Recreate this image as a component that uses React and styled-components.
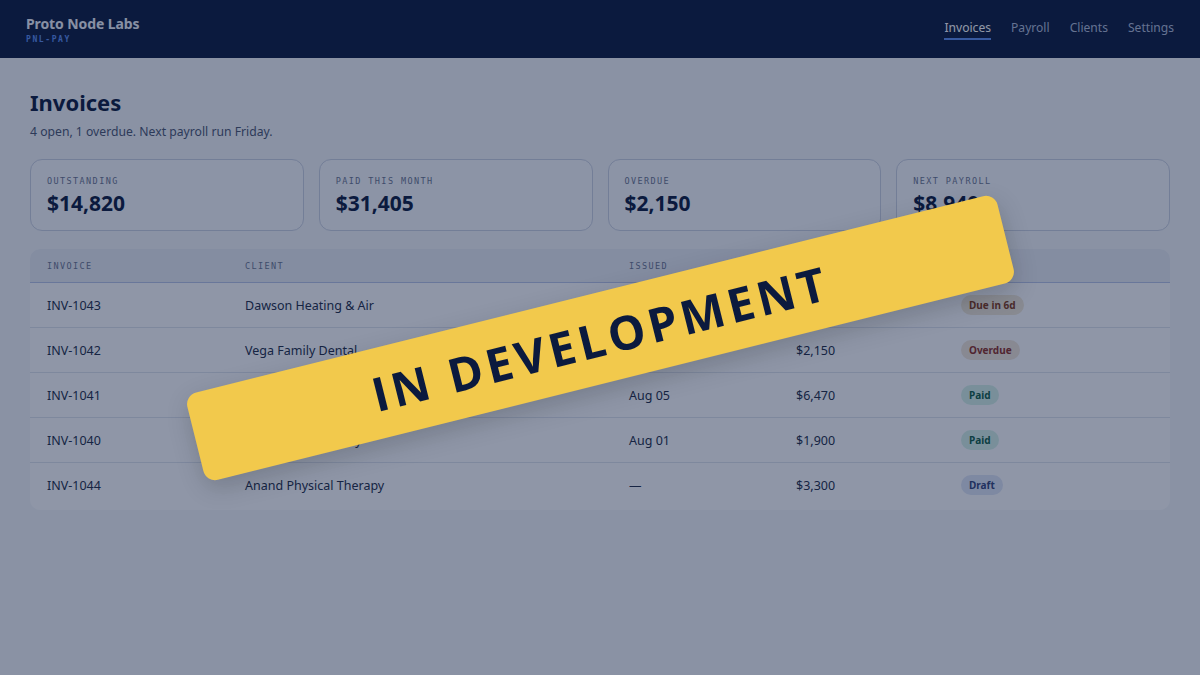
import React from 'react';
import styled, { createGlobalStyle } from 'styled-components';

const GlobalStyle = createGlobalStyle`
  html, body {
    margin: 0;
    padding: 0;
    background: #f2f4f8;
  }
  body {
    font-family: "Noto Sans", "Liberation Sans", sans-serif;
    color: #1f2942;
  }
`;

const Page = styled.div`
  min-height: 675px;
  background: #f2f4f8;
`;

const TopBar = styled.header`
  height: 58px;
  background: #0b1a3e;
  display: flex;
  align-items: center;
  justify-content: space-between;
  padding: 0 26px;
  box-sizing: border-box;
`;

const Brand = styled.div`
  display: flex;
  flex-direction: column;
  gap: 2px;
`;

const BrandName = styled.div`
  font-size: 14px;
  font-weight: 700;
  color: #eef1f8;
  letter-spacing: -0.1px;
`;

const BrandTag = styled.div`
  font-family: "DejaVu Sans Mono", monospace;
  font-size: 8px;
  font-weight: 700;
  letter-spacing: 1.6px;
  color: #5b8def;
`;

const Nav = styled.nav`
  display: flex;
  gap: 20px;
  margin-top: -3px;
`;

const NavLink = styled.a`
  font-size: 12.1px;
  color: ${p => (p.$active ? '#ffffff' : '#aebbd6')};
  text-decoration: none;
  padding: 4px 0 2px;
  border-bottom: 2px solid ${p => (p.$active ? '#5b8def' : 'transparent')};
`;

const Main = styled.main`
  padding: 30px 30px 0;
`;

const Title = styled.h1`
  margin: 0;
  font-size: 22px;
  font-weight: 700;
  color: #0b1a3e;
  line-height: 28px;
`;

const Subtitle = styled.p`
  margin: 7px 0 0;
  font-size: 12.2px;
  color: #4a5470;
`;

const Stats = styled.div`
  margin-top: 19px;
  display: grid;
  grid-template-columns: repeat(4, 1fr);
  gap: 15px;
`;

const StatCard = styled.div`
  height: 72px;
  box-sizing: border-box;
  border: 1px solid #c9d0e0;
  border-radius: 12px;
  background: #f6f7fb;
  padding: 16px 16px 0;
`;

const StatLabel = styled.div`
  font-family: "DejaVu Sans Mono", monospace;
  font-size: 8.5px;
  letter-spacing: 1.4px;
  color: #6b7590;
  text-transform: uppercase;
`;

const StatValue = styled.div`
  margin-top: 3px;
  font-size: 21px;
  font-weight: 700;
  color: #0b1a3e;
`;

const Table = styled.div`
  margin-top: 18px;
  background: #fbfcfe;
  border-radius: 10px;
  overflow: hidden;
  padding-bottom: 3px;
`;

const Row = styled.div`
  display: grid;
  grid-template-columns: 198px 384px 167px 165px 1fr;
  align-items: center;
  height: ${p => (p.$head ? '33px' : '44px')};
  background: ${p => (p.$head ? '#e8ebf3' : 'transparent')};
  border-bottom: 1px solid ${p => (p.$head ? '#b7c3e6' : '#dde2ec')};
  &:last-child {
    border-bottom: none;
  }
`;

const HeadCell = styled.div`
  padding-left: 17px;
  font-family: "DejaVu Sans Mono", monospace;
  font-size: 8.5px;
  letter-spacing: 1.4px;
  color: #6b7590;
`;

const Cell = styled.div`
  padding-left: 17px;
  font-size: 12.5px;
  color: #222c47;
`;

const badgeTones = {
  due: { bg: '#efe6d6', fg: '#7f3a1a' },
  overdue: { bg: '#efe3d8', fg: '#8a2f25' },
  paid: { bg: '#d4efe6', fg: '#0d5c45' },
  draft: { bg: '#dde3f4', fg: '#34447a' },
};

const Badge = styled.span`
  display: inline-block;
  padding: 3px 8px;
  border-radius: 10px;
  font-size: 10px;
  font-weight: 700;
  background: ${p => badgeTones[p.$tone].bg};
  color: ${p => badgeTones[p.$tone].fg};
`;

const Overlay = styled.div`
  position: fixed;
  inset: 0;
  background: rgba(11, 26, 62, 0.45);
  display: flex;
  align-items: center;
  justify-content: center;
  pointer-events: none;
`;

const Ribbon = styled.div`
  width: 835px;
  height: 90px;
  background: #f2c94c;
  border-radius: 12px;
  transform: rotate(-14deg);
  display: flex;
  align-items: center;
  justify-content: center;
  box-shadow: 0 8px 24px rgba(0, 0, 0, 0.18);
`;

const RibbonText = styled.span`
  font-family: "Open Sans", "Noto Sans", sans-serif;
  font-size: 47px;
  font-weight: 700;
  letter-spacing: 4px;
  color: #0b1a3e;
`;

const stats = [
  ['Outstanding', '$14,820'],
  ['Paid this month', '$31,405'],
  ['Overdue', '$2,150'],
  ['Next payroll', '$8,940'],
];

const invoices = [
  ['INV-1043', 'Dawson Heating & Air', 'Aug 12', '$4,820', 'due', 'Due in 6d'],
  ['INV-1042', 'Vega Family Dental', 'Jul 20', '$2,150', 'overdue', 'Overdue'],
  ['INV-1041', 'Northline Roofing', 'Aug 05', '$6,470', 'paid', 'Paid'],
  ['INV-1040', 'Cedar Street Bakery', 'Aug 01', '$1,900', 'paid', 'Paid'],
  ['INV-1044', 'Anand Physical Therapy', '—', '$3,300', 'draft', 'Draft'],
];

export default function App() {
  return (
    <Page>
      <GlobalStyle />
      <TopBar>
        <Brand>
          <BrandName>Proto Node Labs</BrandName>
          <BrandTag>PNL-PAY</BrandTag>
        </Brand>
        <Nav>
          <NavLink $active>Invoices</NavLink>
          <NavLink>Payroll</NavLink>
          <NavLink>Clients</NavLink>
          <NavLink>Settings</NavLink>
        </Nav>
      </TopBar>
      <Main>
        <Title>Invoices</Title>
        <Subtitle>4 open, 1 overdue. Next payroll run Friday.</Subtitle>
        <Stats>
          {stats.map(([label, value]) => (
            <StatCard key={label}>
              <StatLabel>{label}</StatLabel>
              <StatValue>{value}</StatValue>
            </StatCard>
          ))}
        </Stats>
        <Table>
          <Row $head>
            <HeadCell>INVOICE</HeadCell>
            <HeadCell>CLIENT</HeadCell>
            <HeadCell>ISSUED</HeadCell>
            <HeadCell>AMOUNT</HeadCell>
            <HeadCell>STATUS</HeadCell>
          </Row>
          {invoices.map(([id, client, issued, amount, tone, status]) => (
            <Row key={id}>
              <Cell>{id}</Cell>
              <Cell>{client}</Cell>
              <Cell>{issued}</Cell>
              <Cell>{amount}</Cell>
              <Cell>
                <Badge $tone={tone}>{status}</Badge>
              </Cell>
            </Row>
          ))}
        </Table>
      </Main>
      <Overlay>
        <Ribbon>
          <RibbonText>IN DEVELOPMENT</RibbonText>
        </Ribbon>
      </Overlay>
    </Page>
  );
}
